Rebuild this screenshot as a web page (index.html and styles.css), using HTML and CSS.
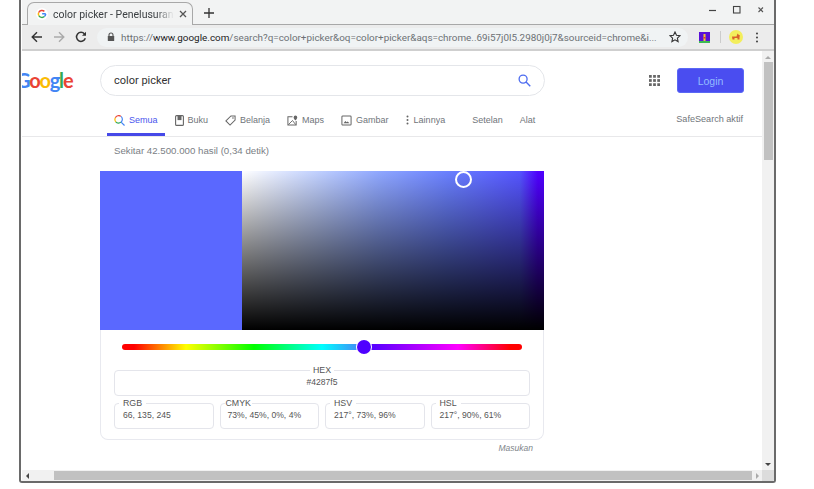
FILE: index.html
```html
<!DOCTYPE html>
<html lang="en">
<head>
    <meta charset="UTF-8">
    <meta name="viewport" content="width=device-width, initial-scale=1.0">
    <title>color picker - Penelusuran Google</title>
    <link rel="stylesheet" href="styles.css">
</head>
<body>
    <div class="window">
        <!-- tab strip -->
        <div class="tabstrip">
            <div class="tab">
                <svg class="favicon" viewBox="0 0 16 16">
                    <circle cx="8" cy="8" r="8" fill="#fff"/>
                    <path d="M13 7.800H8.200M12.900 8a5 5 0 0 1-1.700 3.400" fill="none" stroke="#4285f4" stroke-width="2"/>
                    <path d="M11.200 11.400A5 5 0 0 1 3.600 10" fill="none" stroke="#34a853" stroke-width="2"/>
                    <path d="M3.600 10a5 5 0 0 1 0-4" fill="none" stroke="#fbbc05" stroke-width="2"/>
                    <path d="M3.600 6a5 5 0 0 1 7.600-1.600" fill="none" stroke="#ea4335" stroke-width="2"/>
                </svg>
                <span class="tab-title">color picker - Penelusuran Google</span>
                <svg class="tab-close" viewBox="0 0 8 8"><path d="M1 1l6 6M7 1L1 7" stroke="#555" stroke-width="1.300"/></svg>
            </div>
            <svg class="new-tab" viewBox="0 0 10 10"><path d="M5 0v10M0 5h10" stroke="#333" stroke-width="1.300"/></svg>
            <div class="window-controls">
                <svg viewBox="0 0 10 10"><path d="M1 5.500h7" stroke="#444" stroke-width="1.200"/></svg>
                <svg viewBox="0 0 10 10"><rect x="1.500" y="1.500" width="6.500" height="6.500" fill="none" stroke="#444" stroke-width="1.100"/></svg>
                <svg viewBox="0 0 10 10"><path d="M2.500 2.500l4.500 4.500M7 2.500L2.500 7" stroke="#555" stroke-width="1.100"/></svg>
            </div>
        </div>

        <!-- toolbar -->
        <div class="toolbar">
            <svg class="nav-btn" viewBox="0 0 12 12"><path d="M11 6H1.500M6 1.200L1.200 6 6 10.800" fill="none" stroke="#333" stroke-width="1.400"/></svg>
            <svg class="nav-btn" viewBox="0 0 12 12"><path d="M1 6h9.500M6 1.200L10.800 6 6 10.800" fill="none" stroke="#aaa" stroke-width="1.400"/></svg>
            <svg class="nav-btn" viewBox="0 0 12 12"><path d="M10.300 7.300A4.500 4.500 0 1 1 9.500 3" fill="none" stroke="#333" stroke-width="1.500"/><path d="M11 .8v4H7z" fill="#333"/></svg>
            <div class="omnibox">
                <svg class="lock" viewBox="0 0 8 10"><path d="M2 4.500V3a2 2 0 0 1 4 0v1.500" fill="none" stroke="#555" stroke-width="1.100"/><rect x=".8" y="4" width="6.400" height="5" rx=".6" fill="#555"/></svg>
                <span class="url">https://<b>www.google.com</b>/search?q=color+picker&amp;oq=color+picker&amp;aqs=chrome..69i57j0l5.2980j0j7&amp;sourceid=chrome&amp;i...</span>
                <svg class="star" viewBox="0 0 12 12"><path d="M6 1l1.500 3.300 3.500.4-2.600 2.400.7 3.500L6 8.800l-3.100 1.800.7-3.500L1 4.700l3.500-.4z" fill="none" stroke="#333" stroke-width="1.100"/></svg>
            </div>
            <svg class="ext" viewBox="0 0 11 11">
                <rect width="11" height="11" fill="#5a10d8"/>
                <rect y="9" width="11" height="2" fill="#3cba54"/>
                <rect x="4.500" y="2" width="2" height="7" fill="#f4c430"/>
                <rect x="4.500" y="5" width="2" height="1.500" fill="#e0402a"/>
            </svg>
            <div class="toolbar-sep"></div>
            <svg class="avatar" viewBox="0 0 14 14">
                <circle cx="7" cy="7" r="7" fill="#f3ee5c"/>
                <path d="M3 6.500h4.500l1-3 1.500 1.500 1 .5-.5 1.500v2.500H8.500V8H5.500v1.500H3.500z" fill="#d9622b"/>
            </svg>
            <svg class="menu-dots" viewBox="0 0 4 14"><circle cx="2" cy="2" r="1.300" fill="#444"/><circle cx="2" cy="7" r="1.300" fill="#444"/><circle cx="2" cy="12" r="1.300" fill="#444"/></svg>
        </div>

        <div class="viewport">
            <div class="page">
                <header class="search-head">
                    <div class="logo"><span class="blue">G</span><span class="red">o</span><span class="yellow">o</span><span class="blue">g</span><span class="green">l</span><span class="red">e</span></div>
                    <div class="searchbox">
                        <span>color picker</span>
                        <svg class="search-icon" viewBox="0 0 14 14"><circle cx="5.500" cy="5.500" r="4.300" fill="none" stroke="#4d6cf0" stroke-width="1.400"/><path d="M8.700 8.700l4.500 4.500" stroke="#4d6cf0" stroke-width="1.500"/></svg>
                    </div>
                    <svg class="apps" viewBox="0 0 12 12">
                        <g fill="#666">
                            <rect width="3" height="3"/><rect x="4.500" width="3" height="3"/><rect x="9" width="3" height="3"/>
                            <rect y="4.500" width="3" height="3"/><rect x="4.500" y="4.500" width="3" height="3"/><rect x="9" y="4.500" width="3" height="3"/>
                            <rect y="9" width="3" height="3"/><rect x="4.500" y="9" width="3" height="3"/><rect x="9" y="9" width="3" height="3"/>
                        </g>
                    </svg>
                    <button class="login">Login</button>
                </header>

                <nav class="tabs">
                    <a class="tab-link active">
                        <svg viewBox="0 0 12 12"><path d="M7.600 1.500A4 4 0 0 0 1.500 3" fill="none" stroke="#ea4335" stroke-width="1.300"/><path d="M1.500 3a4 4 0 0 0 .4 4.400" fill="none" stroke="#fbbc05" stroke-width="1.300"/><path d="M1.900 7.400a4 4 0 0 0 5.700.4" fill="none" stroke="#34a853" stroke-width="1.300"/><path d="M7.600 7.800a4 4 0 0 0 0-6.300M7.700 7.700l3.800 3.800" fill="none" stroke="#4285f4" stroke-width="1.300"/></svg>
                        Semua
                    </a>
                    <a class="tab-link">
                        <svg class="icon-buku" viewBox="0 0 9 11"><rect x=".6" y=".6" width="7.800" height="9.800" rx="1" fill="none" stroke="#666" stroke-width="1.100"/><rect x="2.500" y=".6" width="4" height="4.500" fill="#666"/></svg>
                        Buku
                    </a>
                    <a class="tab-link">
                        <svg viewBox="0 0 12 12"><path d="M1 6.500L6.500 1H11v4.500L5.500 11z" fill="none" stroke="#666" stroke-width="1.100"/><circle cx="8.700" cy="3.300" r=".9" fill="#666"/></svg>
                        Belanja
                    </a>
                    <a class="tab-link">
                        <svg viewBox="0 0 12 12"><path d="M6 2H1v9h9V6.500" fill="none" stroke="#666" stroke-width="1.100"/><path d="M1.500 10.500L6 6l3.500 4.500" fill="none" stroke="#666" stroke-width="1"/><path d="M9.200.6a2 2 0 0 1 2 2c0 1.400-2 3.200-2 3.200s-2-1.800-2-3.200a2 2 0 0 1 2-2z" fill="#666"/></svg>
                        Maps
                    </a>
                    <a class="tab-link">
                        <svg viewBox="0 0 12 12"><rect x="1" y="1" width="10" height="10" rx="1" fill="none" stroke="#666" stroke-width="1.100"/><path d="M2.800 9l2-2.500 1.300 1.500 1.200-1 1.900 2z" fill="#666"/></svg>
                        Gambar
                    </a>
                    <a class="tab-link more">
                        <svg class="icon-more" viewBox="0 0 3 10"><circle cx="1.500" cy="1.400" r="1" fill="#666"/><circle cx="1.500" cy="5" r="1" fill="#666"/><circle cx="1.500" cy="8.600" r="1" fill="#666"/></svg>
                        Lainnya
                    </a>
                    <a class="tab-link settings">Setelan</a>
                    <a class="tab-link">Alat</a>
                    <span class="safesearch">SafeSearch aktif</span>
                </nav>

                <p class="stats">Sekitar 42.500.000 hasil (0,34 detik)</p>

                <section class="picker">
                    <div class="picker-top">
                        <div class="swatch"></div>
                        <div class="sat-area"><span class="sat-handle"></span></div>
                    </div>
                    <div class="picker-body">
                        <div class="hue-bar"><span class="hue-knob"></span></div>
                        <fieldset class="field field-hex">
                            <legend>HEX</legend>
                            #4287f5
                        </fieldset>
                        <div class="field-row">
                            <fieldset class="field">
                                <legend class="left">RGB</legend>
                                66, 135, 245
                            </fieldset>
                            <fieldset class="field field-cmyk">
                                <legend class="left tight">CMYK</legend>
                                73%, 45%, 0%, 4%
                            </fieldset>
                            <fieldset class="field">
                                <legend class="left">HSV</legend>
                                217°, 73%, 96%
                            </fieldset>
                            <fieldset class="field">
                                <legend class="left">HSL</legend>
                                217°, 90%, 61%
                            </fieldset>
                        </div>
                    </div>
                </section>
                <div class="feedback">Masukan</div>
            </div>

            <div class="vscroll">
                <span class="arrow-up"></span>
                <div class="vthumb"></div>
                <span class="spacer"></span>
                <span class="arrow-down"></span>
            </div>
        </div>

        <div class="hscroll">
            <span class="arrow-left"></span>
            <div class="hthumb"></div>
            <span class="arrow-right"></span>
            <span class="corner"></span>
        </div>
    </div>
</body>
</html>
```

FILE: styles.css
```css
body {
    margin: 0;
    background-color: #fff;
    font-family: "Liberation Sans", Arial, sans-serif;
    color: #444;
    overflow: hidden;
}

.window {
    width: 757px;
    height: 483px;
    margin-left: 19px;
    box-sizing: border-box;
    border: 2px solid #6a6a6a;
    border-top: none;
    border-radius: 0 0 3px 3px;
    padding-left: 1px;
    display: flex;
    flex-direction: column;
    overflow: hidden;
    background-color: #fff;
}

/* tab strip */
.tabstrip {
    height: 25px;
    flex: none;
    box-sizing: border-box;
    background-color: #f2f3f3;
    border-bottom: 1px solid #a8a8a8;
    display: flex;
    align-items: flex-end;
    padding-left: 5px;
}

.tab {
    width: 166px;
    height: 23px;
    margin-bottom: -1px;
    box-sizing: border-box;
    background-color: #f2f3f3;
    border: 1px solid #a8a8a8;
    border-bottom: none;
    border-radius: 7px 7px 0 0;
    display: flex;
    align-items: center;
    padding-left: 8px;
    position: relative;
}

.favicon {
    width: 12px;
    height: 12px;
    flex: none;
}

.tab-title {
    width: 121px;
    margin-left: 5px;
    font-family: "Roboto", sans-serif;
    font-size: 10.5px;
    white-space: nowrap;
    overflow: hidden;
    color: #3c4043;
    -webkit-mask-image: linear-gradient(to right, #000 85%, transparent);
    mask-image: linear-gradient(to right, #000 85%, transparent);
}

.tab-close {
    width: 8px;
    height: 8px;
    margin-left: 5px;
}

.new-tab {
    width: 10px;
    height: 10px;
    margin: 0 0 6px 11px;
    flex: none;
}

.window-controls {
    margin-left: auto;
    align-self: flex-start;
    display: flex;
    gap: 14px;
    padding: 5px 8px 0 0;
}

.window-controls svg {
    width: 10px;
    height: 10px;
}

/* toolbar */
.toolbar {
    height: 26px;
    flex: none;
    box-sizing: border-box;
    background-color: #ececec;
    border-bottom: 2px solid #cfcfcf;
    display: flex;
    align-items: center;
    padding-left: 9px;
}

.nav-btn {
    width: 12px;
    height: 12px;
    margin-right: 10px;
    flex: none;
}

.omnibox {
    width: 591px;
    height: 19px;
    box-sizing: border-box;
    background-color: #f0f3f4;
    border-radius: 10px;
    display: flex;
    align-items: center;
    padding: 0 7px 0 10px;
    flex: none;
}

.lock {
    width: 8px;
    height: 10px;
    flex: none;
}

.url {
    margin-left: 6px;
    width: 538px;
    font-family: "Roboto", sans-serif;
    font-size: 9.9px;
    color: #6d7175;
    white-space: nowrap;
    overflow: hidden;
}

.url b {
    font-weight: normal;
    color: #222;
}

.star {
    width: 12px;
    height: 12px;
    margin-left: auto;
    flex: none;
}

.ext {
    width: 11px;
    height: 11px;
    margin-left: 11px;
    flex: none;
}

.toolbar-sep {
    width: 1px;
    height: 12px;
    margin-left: 10px;
    background-color: #ccc;
}

.avatar {
    width: 14px;
    height: 14px;
    margin-left: 8px;
    flex: none;
}

.menu-dots {
    width: 4px;
    height: 11px;
    margin-left: 12px;
    flex: none;
}

/* content */
.viewport {
    flex: 1;
    display: flex;
    min-height: 0;
}

.page {
    flex: 1;
    min-width: 0;
    overflow: hidden;
}

.search-head {
    display: flex;
    align-items: center;
    height: 31px;
    margin-top: 14px;
}

.logo {
    width: 84px;
    margin-left: -6px;
    font-family: "Lato", sans-serif;
    font-size: 20px;
    font-weight: 700;
    letter-spacing: -1.2px;
    flex: none;
    line-height: 31px;
}

.logo .blue { color: #4285f4; }
.logo .red { color: #ea4335; }
.logo .yellow { color: #fbbc05; }
.logo .green { color: #34a853; }

.searchbox {
    width: 445px;
    height: 31px;
    box-sizing: border-box;
    border: 1px solid #e4e6ea;
    border-radius: 16px;
    display: flex;
    align-items: center;
    justify-content: space-between;
    padding: 0 13px 0 13px;
    font-family: "Roboto", sans-serif;
    font-size: 11px;
    color: #333;
    flex: none;
}

.search-icon {
    width: 13px;
    height: 13px;
}

.apps {
    width: 11px;
    height: 11px;
    margin-left: 104px;
    flex: none;
}

.login {
    width: 67px;
    height: 25px;
    margin-left: 17px;
    border: 1px solid #5a68f5;
    border-radius: 3px;
    background-color: #4a4df0;
    color: #94bcff;
    font-family: "Liberation Sans", Arial, sans-serif;
    font-size: 10.5px;
    flex: none;
}

.tabs {
    height: 41px;
    box-sizing: border-box;
    border-bottom: 1px solid #e8e8ea;
    display: flex;
    align-items: stretch;
    padding-left: 85px;
    font-size: 9px;
    color: #70757a;
}

.tab-link {
    display: flex;
    align-items: center;
    gap: 4px;
    padding-top: 8px;
    margin-right: 17px;
}

.tab-link svg {
    width: 11px;
    height: 11px;
    flex: none;
}

.tab-link .icon-buku {
    width: 9px;
}

.tab-link .icon-more {
    width: 3px;
    height: 10px;
    margin-right: 1px;
}

.tab-link.active {
    color: #4a55ee;
    padding-left: 7px;
    padding-right: 7px;
    margin-right: 10px;
    border-bottom: 3px solid #4649e8;
    padding-top: 11px;
}

.tab-link.more {
    margin-right: 27px;
}

.safesearch {
    margin-left: auto;
    margin-right: 19px;
    font-size: 9.1px;
    padding-top: 5px;
    align-self: center;
}

.stats {
    margin: 7px 0 0 92px;
    font-size: 9.7px;
    line-height: 14px;
    color: #7b8085;
}

.picker {
    width: 444px;
    box-sizing: border-box;
    margin: 13px 0 0 78px;
    border: 1px solid #e8e9ef;
    border-top: none;
    border-radius: 0 0 8px 8px;
}

.picker-top {
    display: flex;
    height: 159px;
    margin: 0 -1px;
}

.swatch {
    width: 142px;
    background-color: #5a68ff;
}

.sat-area {
    flex: 1;
    position: relative;
    background: linear-gradient(to top, #000, rgba(0, 0, 0, 0)), linear-gradient(to right, #fff 0%, #c0d0ff 25%, #90a8ff 45%, #6a80ff 68%, #5555ff 92%, #4f00ff 98%);
}

.sat-handle {
    position: absolute;
    left: 213px;
    top: 0;
    width: 13px;
    height: 13px;
    border: 2px solid #fff;
    border-radius: 50%;
}

.picker-body {
    padding: 14px 13px 10px 13px;
}

.hue-bar {
    height: 6px;
    margin: 0 8px;
    border-radius: 3px;
    position: relative;
    background: linear-gradient(to right, #f00 3%, #ff0 16%, #0f0 33%, #0ff 50%, #4a80f5 60%, #5000ff 62%, #f0f 84%, #f00 97%);
}

.hue-knob {
    position: absolute;
    left: 235px;
    top: -4px;
    width: 14px;
    height: 14px;
    border-radius: 50%;
    background-color: #4f00ff;
    box-shadow: 0 0 0 1px #fff;
}

.field {
    margin: 0;
    padding: 0 8px;
    min-width: 0;
    border: 1px solid #e4e5eb;
    border-radius: 4px;
    font-size: 8.6px;
    line-height: 15px;
    color: #555;
}

.field legend {
    padding: 0 3px;
    font-size: 8.8px;
    line-height: 10px;
    color: #555;
    text-align: center;
}

.field legend.left {
    margin-left: -4px;
    padding: 0 4px;
    text-align: left;
}

.field legend.tight {
    margin-left: -3px;
    padding: 0 1px;
}

.field-hex {
    margin-top: 15px;
    height: 31px;
    box-sizing: border-box;
    text-align: center;
}

.field-row {
    display: grid;
    grid-template-columns: repeat(4, 1fr);
    gap: 6px;
    margin-top: 2px;
}

.field-row .field {
    height: 31px;
    box-sizing: border-box;
}

.field-cmyk {
    padding-left: 7px;
}

.feedback {
    width: 511px;
    margin-top: 3px;
    text-align: right;
    font-size: 8.5px;
    font-style: italic;
    color: #80858a;
}

/* scrollbars */
.vscroll {
    width: 12px;
    flex: none;
    background-color: #f1f1f1;
    display: flex;
    flex-direction: column;
    align-items: center;
}

.arrow-up {
    margin: 5px 0 3px;
    border: 3px solid transparent;
    border-top: none;
    border-bottom: 3px solid #aaa;
}

.vthumb {
    width: 9px;
    height: 98px;
    background-color: #c1c1c1;
}

.spacer {
    flex: 1;
}

.arrow-down {
    margin-bottom: 4px;
    border: 3px solid transparent;
    border-bottom: none;
    border-top: 3px solid #444;
}

.hscroll {
    height: 11px;
    flex: none;
    background-color: #f1f1f1;
    display: flex;
    align-items: center;
}

.arrow-left {
    margin-left: 4px;
    border: 3px solid transparent;
    border-left: none;
    border-right: 3px solid #444;
}

.hthumb {
    width: 698px;
    height: 9px;
    margin-left: 25px;
    background-color: #c1c1c1;
}

.arrow-right {
    margin-left: 4px;
    border: 3px solid transparent;
    border-right: none;
    border-left: 3px solid #aaa;
}

.corner {
    align-self: stretch;
    margin-left: auto;
    width: 12px;
    background-color: #dcdcdc;
}
```
